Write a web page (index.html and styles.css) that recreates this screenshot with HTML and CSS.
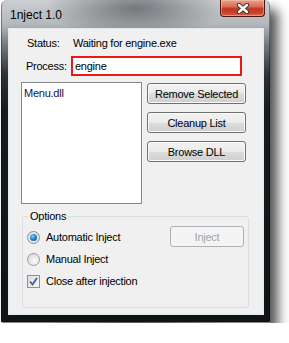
FILE: index.html
```html
<!DOCTYPE html>
<html lang="en">
<head>
  <meta charset="UTF-8">
  <meta name="viewport" content="width=device-width, initial-scale=1.0">
  <title>1nject 1.0</title>
  <link rel="stylesheet" href="styles.css">
</head>
<body>
  <div class="window">
    <div class="titlebar">
      <span class="title">1nject 1.0</span>
      <div class="close">
        <svg width="14" height="11" viewBox="0 0 14 11">
          <path d="M3 2 L11 9 M11 2 L3 9" stroke="#3a3a3a" stroke-width="4.4" stroke-linecap="round"/>
          <path d="M3 2 L11 9 M11 2 L3 9" stroke="#fff" stroke-width="2.4" stroke-linecap="round"/>
        </svg>
      </div>
    </div>

    <div class="client">
      <div class="row status">
        <span class="label">Status:</span>
        <span>Waiting for engine.exe</span>
      </div>

      <div class="row process">
        <span class="label">Process:</span>
        <div class="textbox">engine</div>
      </div>

      <div class="middle">
        <div class="listbox">
          <div class="item">Menu.dll</div>
        </div>
        <div class="buttons">
          <button class="btn">Remove Selected</button>
          <button class="btn">Cleanup List</button>
          <button class="btn">Browse DLL</button>
        </div>
      </div>

      <fieldset class="options">
        <legend>Options</legend>
        <div class="options-body">
          <div class="choices">
            <div class="choice"><span class="radio checked"><span class="dot"></span></span>Automatic Inject</div>
            <div class="choice"><span class="radio"></span>Manual Inject</div>
            <div class="choice">
              <span class="checkbox">
                <svg width="11" height="11" viewBox="0 0 11 11">
                  <path d="M2 5.5 L4.5 8.5 L9 2" fill="none" stroke="#4a5d9c" stroke-width="1.8"/>
                </svg>
              </span>Close after injection
            </div>
          </div>
          <button class="btn inject" disabled>Inject</button>
        </div>
      </fieldset>
    </div>
  </div>
</body>
</html>
```

FILE: styles.css
```css
body {
  margin: 0;
  background: #fff;
  font-family: "Liberation Sans", Arial, sans-serif;
  font-size: 11px;
  letter-spacing: -0.25px;
  color: #000;
}
.window {
  width: 269px;
  height: 323px;
  margin-left: 1px;
  box-sizing: border-box;
  padding: 0 5px 7px 6px;
  display: flex;
  flex-direction: column;
  border-radius: 6px 6px 2px 2px;
  border: 1px solid rgba(0,0,0,0.35);
  border-top: none;
  background:
    radial-gradient(ellipse 90px 30px at 50% 8px, rgba(50,54,58,0.55), rgba(50,54,58,0) 100%),
    linear-gradient(to bottom, #cbcfd2 0, #b3b8bc 24px, #737a7f 45px, #2c3236 75px, #161b1f 110px, #0f1417 100%);
  box-shadow: 8px 9px 12px rgba(0,0,0,0.68);
}
.titlebar {
  height: 28px;
  display: flex;
  align-items: flex-start;
}
.title {
  margin: 8px 0 0 2px;
  font-size: 12px;
  line-height: 14px;
  letter-spacing: 0;
  color: #000;
}
.close {
  margin-left: auto;
  width: 45px;
  height: 17px;
  margin-right: -1px;
  box-sizing: border-box;
  border: 1px solid #4f160d;
  border-top: none;
  border-radius: 0 0 4px 4px;
  background: linear-gradient(to bottom, #eba08c 0, #d9705a 40%, #c3351e 55%, #c8432a 80%, #d86a50 100%);
  box-shadow: inset 0 0 0 1px rgba(255,210,200,0.45);
  display: flex;
  align-items: center;
  justify-content: center;
}
.client {
  flex: 1;
  background: #f0f0f0;
  border: 1px solid #e4e8eb;
  display: flex;
  flex-direction: column;
}
.row {
  display: flex;
  align-items: center;
}
.status {
  margin-top: 8px;
  line-height: 13px;
  padding-left: 18px;
}
.status .label {
  width: 46px;
}
.process {
  margin-top: 6px;
  padding-left: 17px;
}
.process .label {
  width: 45px;
}
.textbox {
  width: 171px;
  height: 20px;
  box-sizing: border-box;
  border: 2px solid #ec1818;
  background: #fff;
  padding-left: 2px;
  line-height: 16px;
}
.middle {
  display: flex;
  margin-top: 6px;
  padding-left: 12px;
}
.listbox {
  width: 121px;
  height: 122px;
  box-sizing: border-box;
  border: 1px solid #828790;
  background: #fff;
}
.item {
  padding: 4px 2px 0;
  line-height: 13px;
  color: #14143e;
}
.buttons {
  display: flex;
  flex-direction: column;
  gap: 8px;
  margin: 1px 0 0 5px;
}
.btn {
  width: 99px;
  height: 21px;
  padding: 0;
  font-family: inherit;
  font-size: 11px;
  letter-spacing: -0.25px;
  color: #000;
  border: 1px solid #707070;
  border-radius: 3px;
  background: linear-gradient(to bottom, #f2f2f2 0, #ebebeb 50%, #dddddd 50%, #cfcfcf 100%);
  box-shadow: inset 0 0 0 1px #fbfbfb;
}
.options {
  margin: 6px 0 0 13px;
  width: 227px;
  box-sizing: border-box;
  padding: 0 0 15px 4px;
  border: 1px solid #d5dfe5;
  border-radius: 3px;
}
.options legend {
  margin-left: 1px;
  padding: 0 2px;
  line-height: 13px;
}
.options-body {
  display: flex;
  align-items: flex-start;
}
.choices {
  display: flex;
  flex-direction: column;
  padding-top: 3px;
}
.choice {
  height: 22px;
  display: flex;
  align-items: center;
  gap: 6px;
}
.radio {
  width: 13px;
  height: 13px;
  box-sizing: border-box;
  border-radius: 50%;
  border: 1px solid #9a9a9a;
  background: radial-gradient(circle at 60% 65%, #fafafa 0, #e2e2e2 60%, #d0d0d0 100%);
  display: flex;
  align-items: center;
  justify-content: center;
}
.radio.checked {
  border-color: #8a8f94;
  background: radial-gradient(circle, #f4f4f4 0, #dcdcdc 100%);
}
.radio .dot {
  width: 7px;
  height: 7px;
  border-radius: 50%;
  background: radial-gradient(circle at 40% 35%, #7fd4fb 0, #2589c9 45%, #0b3c73 100%);
}
.checkbox {
  width: 13px;
  height: 13px;
  box-sizing: border-box;
  border: 1px solid #8e8f8f;
  background: linear-gradient(135deg, #dcdcdc 0, #f8f8f8 100%);
  display: flex;
  align-items: center;
  justify-content: center;
}
.inject {
  margin: 3px 4px 0 auto;
  width: 74px;
  color: #a3a3a3;
  border-color: #adb2b5;
  background: #f4f4f4;
  box-shadow: none;
}
```
